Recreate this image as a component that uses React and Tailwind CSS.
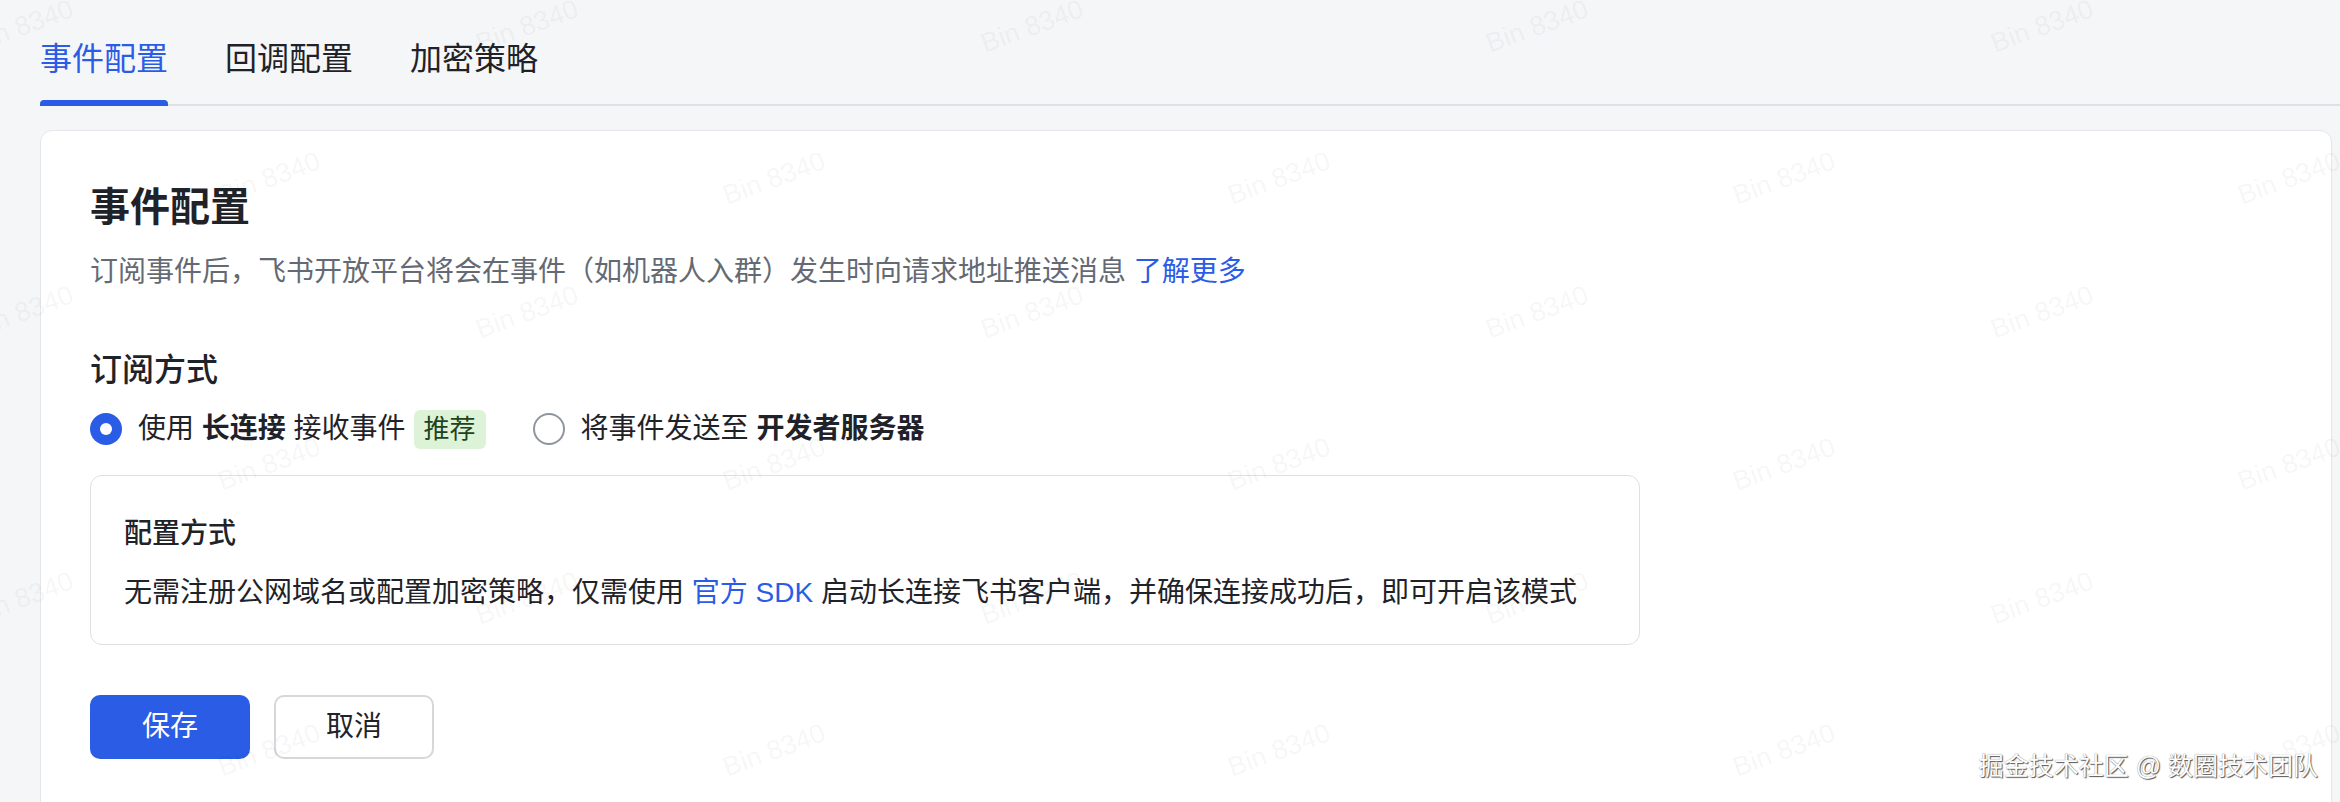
import React, { useState } from 'react';

const tabs = ["事件配置", "回调配置", "加密策略"];

// watermark grid: two staggered rows, repeated every 286px
const marks = [];
for (let r = 0; r < 3; r++) {
  for (let c = 0; c < 5; c++) {
    marks.push({ x: 22 + 505 * c, y: 26 + 286 * r });
    marks.push({ x: 269 + 505 * c, y: 178 + 286 * r });
  }
}

const App = () => {
  const [activeTab, setActiveTab] = useState("事件配置");
  const [mode, setMode] = useState("ws");

  return (
    <div className="relative h-[802px] overflow-hidden bg-[#f5f6f7] font-['Liberation_Sans','Noto_Sans_CJK_SC',sans-serif] text-[#1f2329]">
      {/* --- TABS --- */}
      <div className="ml-[40px] flex gap-[57px] border-b-2 border-[#dee0e3]">
        {tabs.map((t) => (
          <button
            key={t}
            onClick={() => setActiveTab(t)}
            className={`relative pt-[37px] pb-[23px] text-[32px] leading-[44px] ${activeTab === t ? "text-[#2b5ce6]" : "text-[#1f2329]"}`}
          >
            {t}
            {activeTab === t && (
              <span className="absolute left-0 right-0 bottom-[-2px] h-[6px] rounded-t-[4px] bg-[#2b5ce6]" />
            )}
          </button>
        ))}
      </div>

      {/* --- CARD --- */}
      <div className="mt-[24px] ml-[40px] mr-[8px] min-h-[760px] rounded-[12px] border border-[#e4e6e9] bg-white pl-[49px] pt-[48px]">
        <h2 className="text-[40px] leading-[56px] font-semibold">事件配置</h2>
        <p className="mt-[17px] text-[28px] leading-[40px] text-[#646a73]">
          订阅事件后，飞书开放平台将会在事件（如机器人入群）发生时向请求地址推送消息{" "}
          <a href="#" className="text-[#2b5ce6]">了解更多</a>
        </p>

        <h3 className="mt-[56px] text-[32px] leading-[44px] font-medium">订阅方式</h3>
        <div className="mt-[13px] flex h-[48px] items-center text-[28px]">
          <button onClick={() => setMode("ws")} className="flex items-center">
            {mode === "ws" ? (
              <span className="flex h-[32px] w-[32px] items-center justify-center rounded-full bg-[#2b5ce6]">
                <span className="h-[12px] w-[12px] rounded-full bg-white" />
              </span>
            ) : (
              <span className="h-[32px] w-[32px] rounded-full border-2 border-[#8f959e] bg-white" />
            )}
            <span className="ml-[16px]">
              使用 <b className="font-semibold">长连接</b> 接收事件
            </span>
            <span className="ml-[8px] flex h-[39px] items-center rounded-[6px] bg-[#dcf3d7] px-[10px] text-[26px] text-[#22421b]">推荐</span>
          </button>
          <button onClick={() => setMode("http")} className="ml-[47px] flex items-center">
            {mode === "http" ? (
              <span className="flex h-[32px] w-[32px] items-center justify-center rounded-full bg-[#2b5ce6]">
                <span className="h-[12px] w-[12px] rounded-full bg-white" />
              </span>
            ) : (
              <span className="h-[32px] w-[32px] rounded-full border-2 border-[#8f959e] bg-white" />
            )}
            <span className="ml-[16px]">
              将事件发送至 <b className="font-semibold">开发者服务器</b>
            </span>
          </button>
        </div>

        <div className="mt-[22px] w-[1550px] rounded-[12px] border border-[#dee0e3] pl-[33px] pt-[38px] pb-[31px]">
          <div className="text-[28px] leading-[40px] font-medium">配置方式</div>
          <div className="mt-[19px] text-[28px] leading-[40px]">
            无需注册公网域名或配置加密策略，仅需使用 <a href="#" className="text-[#2b5ce6]">官方 SDK</a> 启动长连接飞书客户端，并确保连接成功后，即可开启该模式
          </div>
        </div>

        <div className="mt-[50px] flex gap-[24px]">
          <button className="h-[64px] w-[160px] rounded-[10px] bg-[#2b5ce6] text-[28px] text-white">保存</button>
          <button className="h-[64px] w-[160px] rounded-[10px] border-2 border-[#d5d7da] bg-white text-[28px] text-[#1f2329]">取消</button>
        </div>
      </div>

      {/* --- WATERMARKS --- */}
      <div className="pointer-events-none absolute inset-0">
        {marks.map((m, i) => (
          <div
            key={i}
            className="absolute w-[130px] -rotate-[20deg] text-center text-[27px] leading-[32px] text-black/[0.055]"
            style={{ left: m.x - 65, top: m.y - 16 }}
          >
            Bin 8340
          </div>
        ))}
      </div>

      <div className="pointer-events-none absolute right-[22px] bottom-[20px] text-[25px] leading-[32px] text-white [text-shadow:1px_1px_1px_#555,0_0_1px_#777]">
        掘金技术社区 @ 数圈技术团队
      </div>
    </div>
  );
};

export default App;
